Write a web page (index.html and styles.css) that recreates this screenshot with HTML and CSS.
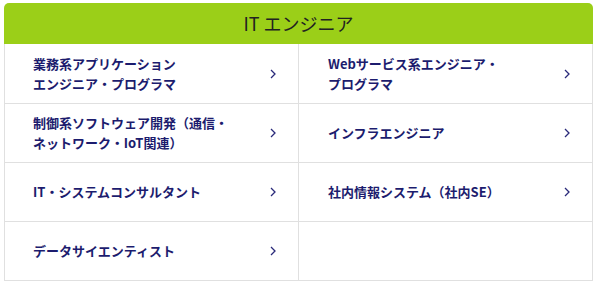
FILE: index.html
```html
<!DOCTYPE html>
<html lang="ja">
<head>
  <meta charset="UTF-8">
  <title>IT エンジニア</title>
  <link rel="stylesheet" href="styles.css">
</head>
<body>
  <div class="jobBox">
    <h2 class="jobTitle">IT エンジニア</h2>
    <div class="jobGrid">
      <a class="jobItem" href="#"><span>業務系アプリケーション<br>エンジニア・プログラマ</span><svg class="chev" viewBox="0 0 6 10"><path d="M1 1 L5 5 L1 9"/></svg></a>
      <a class="jobItem" href="#"><span>Webサービス系エンジニア・<br>プログラマ</span><svg class="chev" viewBox="0 0 6 10"><path d="M1 1 L5 5 L1 9"/></svg></a>
      <a class="jobItem" href="#"><span>制御系ソフトウェア開発（通信・<br>ネットワーク・IoT関連）</span><svg class="chev" viewBox="0 0 6 10"><path d="M1 1 L5 5 L1 9"/></svg></a>
      <a class="jobItem" href="#"><span>インフラエンジニア</span><svg class="chev" viewBox="0 0 6 10"><path d="M1 1 L5 5 L1 9"/></svg></a>
      <a class="jobItem" href="#"><span>IT・システムコンサルタント</span><svg class="chev" viewBox="0 0 6 10"><path d="M1 1 L5 5 L1 9"/></svg></a>
      <a class="jobItem" href="#"><span>社内情報システム（社内SE）</span><svg class="chev" viewBox="0 0 6 10"><path d="M1 1 L5 5 L1 9"/></svg></a>
      <a class="jobItem" href="#"><span>データサイエンティスト</span><svg class="chev" viewBox="0 0 6 10"><path d="M1 1 L5 5 L1 9"/></svg></a>
      <div class="jobItem"></div>
    </div>
  </div>
</body>
</html>
```
FILE: styles.css
```css
body { margin: 0; padding: 3px 7px 0 4px; background: white; font-family: "Noto Sans CJK JP", "Noto Sans", sans-serif; }
.jobBox { width: 589px; }
.jobTitle { margin: 0; height: 41px; line-height: 41px; background-color: #9bcf18; border-radius: 5px 5px 0 0;
            text-align: center; font-size: 18px; font-weight: normal; color: #222; }
.jobGrid { display: grid; grid-template-columns: 1fr 1fr; grid-template-rows: 59px 58px 58px 58px; gap: 1px;
           background-color: #e0e0e0; border: 1px solid #e0e0e0; border-top: none; }
.jobItem { display: flex; align-items: center; justify-content: space-between; background: white;
           padding: 0 22px 0 28px; text-decoration: none; color: #1c1c6e; font-size: 13px; font-weight: bold; line-height: 20px; }
.jobItem:nth-child(even) { padding-left: 29px; }
.chev { width: 6px; height: 10px; fill: none; stroke: #2a2a7a; stroke-width: 1.3; }
```
